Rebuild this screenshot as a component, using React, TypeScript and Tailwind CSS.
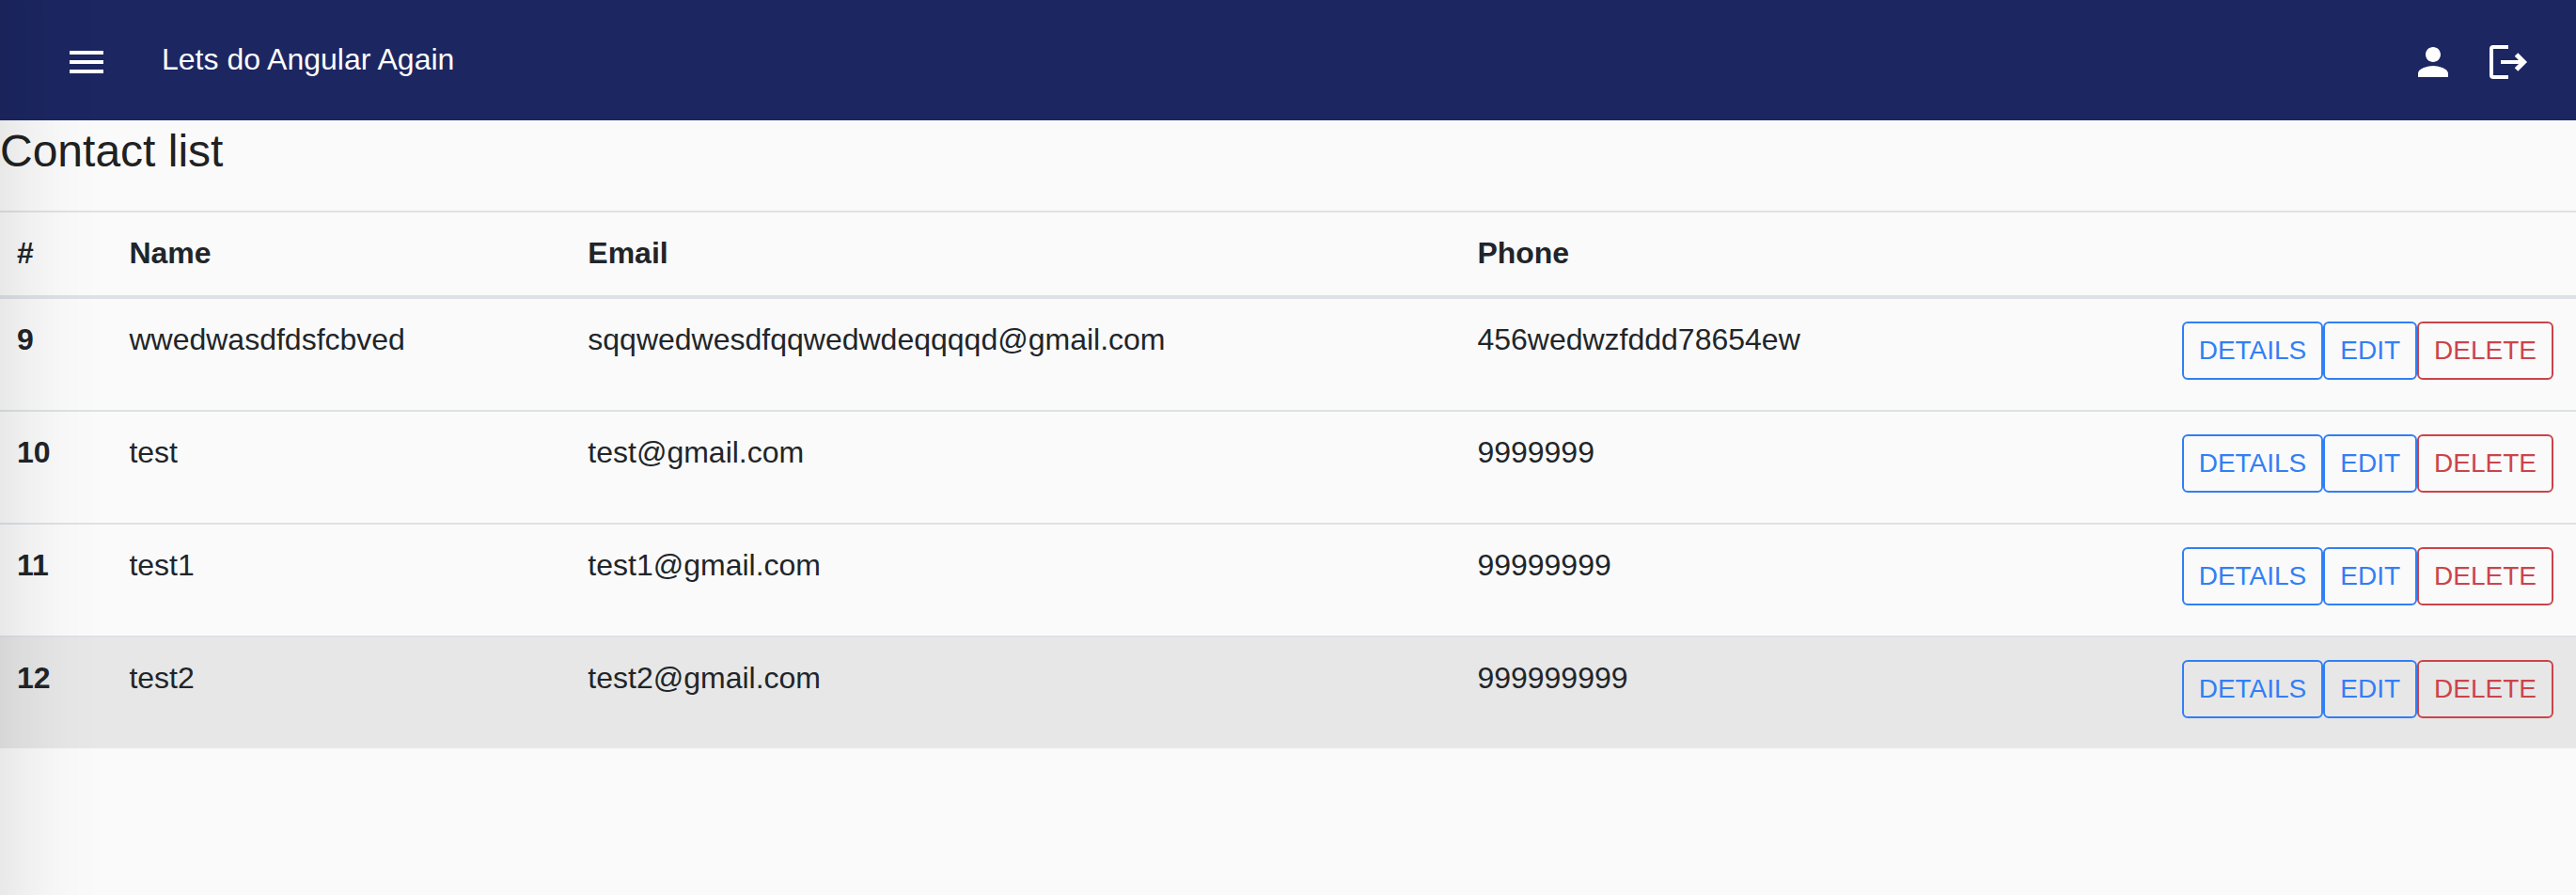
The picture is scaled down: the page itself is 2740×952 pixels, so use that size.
type Contact = { id: number; name: string; email: string; phone: string };

const contacts: Contact[] = [
  { id: 9, name: 'wwedwasdfdsfcbved', email: 'sqqwedwesdfqqwedwdeqqqqd@gmail.com', phone: '456wedwzfddd78654ew' },
  { id: 10, name: 'test', email: 'test@gmail.com', phone: '9999999' },
  { id: 11, name: 'test1', email: 'test1@gmail.com', phone: '99999999' },
  { id: 12, name: 'test2', email: 'test2@gmail.com', phone: '999999999' },
];

const selectedId = 12;

const buttonBase = 'rounded-md border-2 px-4 py-2 text-[28px] leading-[42px]';
const primaryButton = `${buttonBase} border-[#317ff6] text-[#317ff6]`;
const dangerButton = `${buttonBase} border-[#cb444a] text-[#cb444a]`;

function MenuIcon() {
  return (
    <svg viewBox="0 0 24 24" className="size-12 fill-current" aria-hidden="true">
      <path d="M3 18h18v-2H3v2zm0-5h18v-2H3v2zm0-7v2h18V6H3z" />
    </svg>
  );
}

function PersonIcon() {
  return (
    <svg viewBox="0 0 24 24" className="size-12 fill-current" aria-hidden="true">
      <path d="M12 12c2.21 0 4-1.79 4-4s-1.79-4-4-4-4 1.79-4 4 1.79 4 4 4zm0 2c-2.67 0-8 1.34-8 4v2h16v-2c0-2.66-5.33-4-8-4z" />
    </svg>
  );
}

function LogoutIcon() {
  return (
    <svg viewBox="0 0 48 48" className="size-12 fill-none stroke-current" aria-hidden="true">
      <path strokeWidth="4" d="M24 8H8Q6 8 6 10V38Q6 40 8 40H24M16 24H40" />
      <path strokeWidth="5" d="M32.5 16L40.5 24L32.5 32" />
    </svg>
  );
}

function Toolbar() {
  return (
    <header className="flex h-32 items-center bg-[#1c2661] pl-[68px] pr-12 text-white">
      <button type="button" aria-label="Menu" className="mt-1">
        <MenuIcon />
      </button>
      <span className="mb-0.5 ml-14 grow text-[32px] leading-10">Lets do Angular Again</span>
      <div className="mt-1 flex gap-8">
        <button type="button" aria-label="Profile">
          <PersonIcon />
        </button>
        <button type="button" aria-label="Log out">
          <LogoutIcon />
        </button>
      </div>
    </header>
  );
}

function ContactTable() {
  return (
    <table className="w-full border-separate border-spacing-0 text-left text-[32px] leading-[38px] text-[#212529]">
      <thead>
        <tr>
          {['#', 'Name', 'Email', 'Phone', ''].map((label) => (
            <th key={label} className="border-t-2 border-b-4 border-[#dee2e6] px-6 pt-6 pb-[26px] font-bold">
              {label}
            </th>
          ))}
        </tr>
      </thead>
      <tbody>
        {contacts.map((contact, index) => {
          const cell = index === 0 ? 'px-6 pt-6 pb-8 align-top' : 'border-t-2 border-[#dee2e6] px-6 pt-6 pb-8 align-top';
          return (
            <tr key={contact.id} className={contact.id === selectedId ? 'bg-[#e7e7e7]' : ''}>
              <th scope="row" className={`${cell} font-bold`}>
                {contact.id}
              </th>
              <td className={cell}>{contact.name}</td>
              <td className={cell}>{contact.email}</td>
              <td className={cell}>{contact.phone}</td>
              <td className={cell}>
                <div className="flex justify-end">
                  <button type="button" className={primaryButton}>DETAILS</button>
                  <button type="button" className={primaryButton}>EDIT</button>
                  <button type="button" className={dangerButton}>DELETE</button>
                </div>
              </td>
            </tr>
          );
        })}
      </tbody>
    </table>
  );
}

export default function App() {
  return (
    <div className="relative min-h-screen overflow-hidden bg-[#fafafa] font-['Liberation_Sans',Arial,sans-serif]">
      <Toolbar />
      <main>
        <h2 className="mb-[30px] text-[48px] leading-[66px] text-[#212121]">Contact list</h2>
        <div className="-ml-1.5">
          <ContactTable />
        </div>
      </main>
      {/* Edge shadow cast by the collapsed side drawer */}
      <aside className="pointer-events-none absolute -inset-y-24 right-full w-96 shadow-[0_0_100px_0_rgba(0,0,0,0.14)]" />
    </div>
  );
}
